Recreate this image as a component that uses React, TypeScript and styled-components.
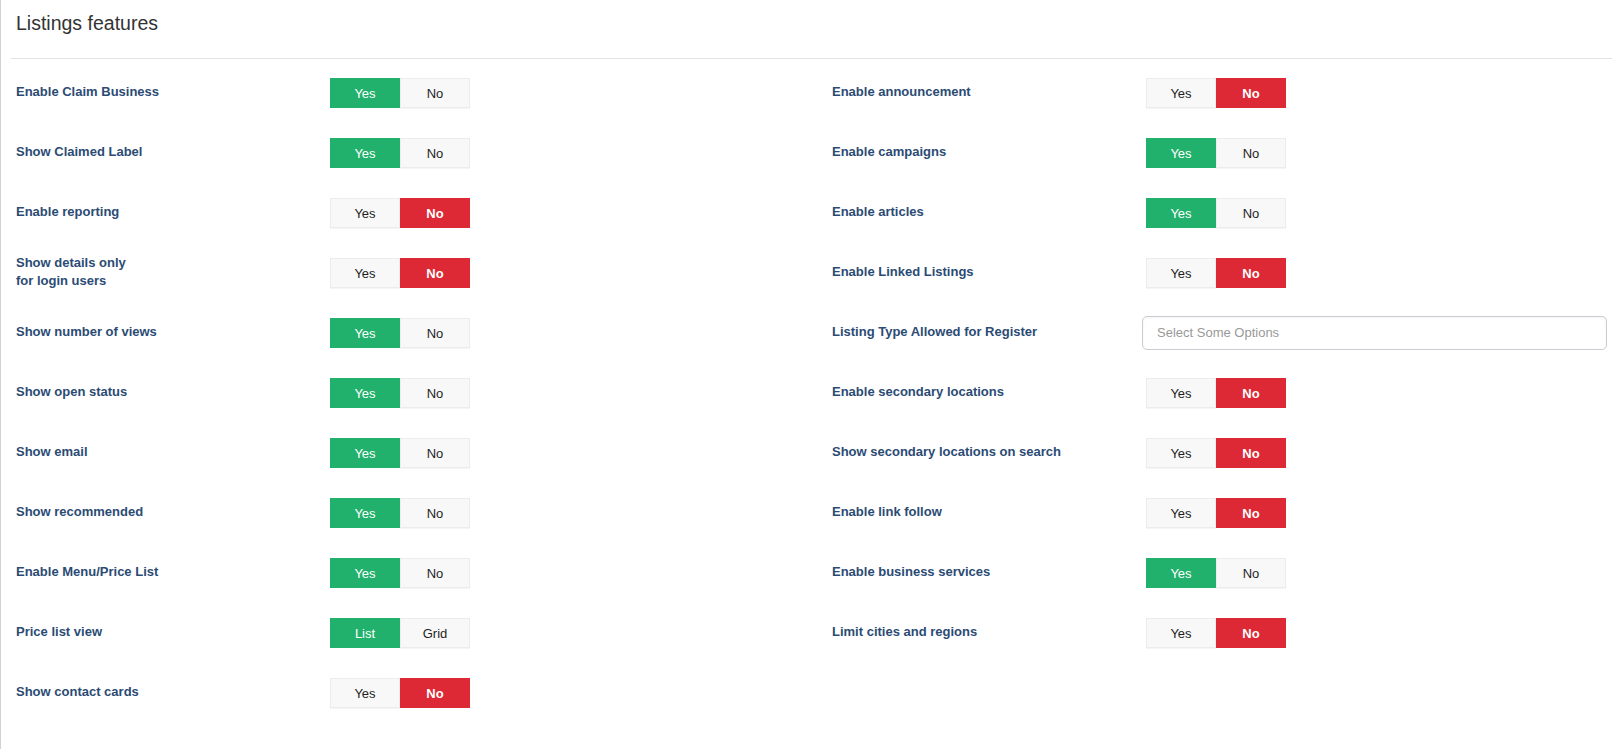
import React from "react";
import styled, { createGlobalStyle } from "styled-components";

const Global = createGlobalStyle`
  html, body { margin: 0; padding: 0; background: #fff; }
  body { font-family: "Liberation Sans", Arial, sans-serif; }
`;

const Page = styled.div`
  min-height: 749px;
  box-sizing: border-box;
  border-left: 1px solid #d2d2d2;
  padding: 0 8px 0 10px;
`;

const Heading = styled.h3`
  margin: 0;
  height: 59px;
  box-sizing: border-box;
  padding: 11px 5px 0;
  font-size: 19.5px;
  font-weight: normal;
  line-height: 24px;
  color: #333;
  border-bottom: 1px solid #e3e3e3;
`;

const Columns = styled.div`
  display: grid;
  grid-template-columns: 816px 1fr;
  padding: 19px 5px 0;
`;

const Column = styled.div`
  display: flex;
  flex-direction: column;
  gap: 30px;
`;

const Row = styled.div`
  display: flex;
  align-items: center;
  height: 30px;
`;

const Label = styled.div`
  width: 314px;
  flex: none;
  font-size: 13px;
  font-weight: bold;
  line-height: 18px;
  color: #2b4b74;
  padding-bottom: 2px;
`;

const Group = styled.div`
  display: flex;
  height: 30px;
`;

type Tone = "green" | "red" | "off";

const Btn = styled.button<{ $tone: Tone }>`
  width: 70px;
  height: 30px;
  box-sizing: border-box;
  margin: 0;
  padding: 0;
  font-family: "Liberation Sans", Arial, sans-serif;
  font-size: 13px;
  font-weight: ${(p) => (p.$tone === "red" ? "bold" : "normal")};
  color: ${(p) => (p.$tone === "off" ? "#1e1e1e" : "#fff")};
  background: ${(p) =>
    p.$tone === "green" ? "#22b16c" : p.$tone === "red" ? "#dd2835" : "#f8f8f8"};
  border: ${(p) => (p.$tone === "off" ? "1px solid #ececec" : "none")};
  box-shadow: ${(p) => (p.$tone === "off" ? "0 1px 1px rgba(0,0,0,0.04)" : "none")};
  cursor: pointer;
`;

const Select = styled.div`
  margin-left: -4px;
  flex: 1;
  height: 34px;
  box-sizing: border-box;
  border: 1px solid #c9cdd2;
  border-radius: 5px;
  box-shadow: inset 0 1px 3px rgba(0, 0, 0, 0.05);
  padding: 0 14px 1px;
  display: flex;
  align-items: center;
  font-size: 13px;
  color: #999;
`;

type Item =
  | { label: React.ReactNode; kind: "toggle"; on: boolean; a?: string; b?: string }
  | { label: React.ReactNode; kind: "select"; placeholder: string };

const left: Item[] = [
  { label: "Enable Claim Business", kind: "toggle", on: true },
  { label: "Show Claimed Label", kind: "toggle", on: true },
  { label: "Enable reporting", kind: "toggle", on: false },
  {
    label: (
      <>
        Show details only
        <br />
        for login users
      </>
    ),
    kind: "toggle",
    on: false,
  },
  { label: "Show number of views", kind: "toggle", on: true },
  { label: "Show open status", kind: "toggle", on: true },
  { label: "Show email", kind: "toggle", on: true },
  { label: "Show recommended", kind: "toggle", on: true },
  { label: "Enable Menu/Price List", kind: "toggle", on: true },
  { label: "Price list view", kind: "toggle", on: true, a: "List", b: "Grid" },
  { label: "Show contact cards", kind: "toggle", on: false },
];

const right: Item[] = [
  { label: "Enable announcement", kind: "toggle", on: false },
  { label: "Enable campaigns", kind: "toggle", on: true },
  { label: "Enable articles", kind: "toggle", on: true },
  { label: "Enable Linked Listings", kind: "toggle", on: false },
  { label: "Listing Type Allowed for Register", kind: "select", placeholder: "Select Some Options" },
  { label: "Enable secondary locations", kind: "toggle", on: false },
  { label: "Show secondary locations on search", kind: "toggle", on: false },
  { label: "Enable link follow", kind: "toggle", on: false },
  { label: "Enable business services", kind: "toggle", on: true },
  { label: "Limit cities and regions", kind: "toggle", on: false },
];

function Field({ item }: { item: Item }) {
  return (
    <Row>
      <Label>{item.label}</Label>
      {item.kind === "toggle" ? (
        <Group>
          <Btn $tone={item.on ? "green" : "off"}>{item.a ?? "Yes"}</Btn>
          <Btn $tone={item.on ? "off" : "red"}>{item.b ?? "No"}</Btn>
        </Group>
      ) : (
        <Select>{item.placeholder}</Select>
      )}
    </Row>
  );
}

export default function App() {
  return (
    <>
      <Global />
      <Page>
        <Heading>Listings features</Heading>
        <Columns>
          <Column>
            {left.map((it, i) => (
              <Field key={i} item={it} />
            ))}
          </Column>
          <Column>
            {right.map((it, i) => (
              <Field key={i} item={it} />
            ))}
          </Column>
        </Columns>
      </Page>
    </>
  );
}
